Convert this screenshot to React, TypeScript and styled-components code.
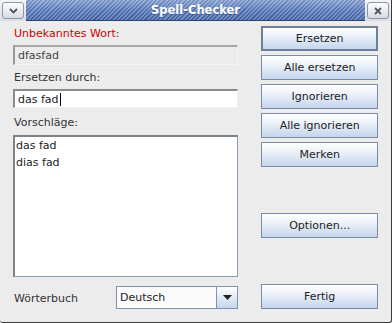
import styled, { createGlobalStyle } from "styled-components";

const GlobalStyle = createGlobalStyle`
  html, body {
    margin: 0;
    padding: 0;
    background: #ededed;
  }
  body {
    font-family: "DejaVu Sans", "Liberation Sans", sans-serif;
    font-size: 11px;
    color: #333333;
  }
`;

const Window = styled.div`
  width: 392px;
  height: 323px;
  box-sizing: border-box;
  display: flex;
  flex-direction: column;
  background: #ececec;
  border-right: 1px solid #3a3a3a;
  border-bottom: 1px solid #3a3a3a;
  border-bottom-left-radius: 3px;
  border-bottom-right-radius: 3px;
  overflow: hidden;
`;

const TitleBar = styled.div`
  height: 21px;
  flex-shrink: 0;
  display: flex;
  align-items: stretch;
  background: linear-gradient(#f4f4f4, #d9dde4);
`;

const WinButton = styled.div`
  width: 22px;
  height: 17px;
  margin: 2px 2px 0 2px;
  box-sizing: border-box;
  border: 1px solid #8c96a8;
  border-radius: 3px;
  background: linear-gradient(#fdfdfd, #d6dbe3);
  display: flex;
  align-items: center;
  justify-content: center;
  color: #505560;
`;

const TitleStrip = styled.div`
  flex: 1;
  display: flex;
  align-items: center;
  justify-content: center;
  border-bottom: 1px solid #2c4170;
  background:
    repeating-linear-gradient(
      135deg,
      rgba(255, 255, 255, 0.2) 0px,
      rgba(255, 255, 255, 0.2) 1.5px,
      rgba(0, 0, 0, 0.1) 1.5px,
      rgba(0, 0, 0, 0.1) 3px
    ),
    linear-gradient(#8aa5d6, #5a7cbf 55%, #4a6cb0);
`;

const Title = styled.span`
  color: #ffffff;
  font-weight: bold;
  font-size: 11.5px;
  text-shadow: 0 1px 0 rgba(30, 50, 100, 0.5);
`;

const Content = styled.div`
  flex: 1;
  display: flex;
  gap: 23px;
  padding: 5px 13px 13px 13px;
`;

const LeftColumn = styled.div`
  width: 226px;
  display: flex;
  flex-direction: column;
`;

const Label = styled.div<{ $gap?: number; $warn?: boolean }>`
  height: 16px;
  line-height: 16px;
  margin-top: ${({ $gap }) => $gap ?? 0}px;
  color: ${({ $warn }) => ($warn ? "#d40000" : "#333333")};
  padding-left: 1px;
`;

const Colon = styled.span`
  color: #333333;
`;

const Field = styled.div<{ $disabled?: boolean; $height: number }>`
  height: ${({ $height }) => $height}px;
  margin-top: 3px;
  box-sizing: border-box;
  display: flex;
  align-items: center;
  padding-left: 3px;
  background: ${({ $disabled }) => ($disabled ? "#ececec" : "#ffffff")};
  border-style: solid;
  border-width: 2px 1px 1px 2px;
  border-color: ${({ $disabled }) =>
    $disabled ? "#a8a8a8 #f4f4f4 #f4f4f4 #9a9a9a" : "#8a8a8a #f2f2f2 #f2f2f2 #8a8a8a"};
  color: ${({ $disabled }) => ($disabled ? "#444444" : "#222222")};
`;

const Caret = styled.span`
  display: inline-block;
  width: 1px;
  height: 13px;
  margin-left: 1px;
  background: #000000;
`;

const ListBox = styled.div`
  height: 142px;
  margin-top: 4px;
  box-sizing: border-box;
  background: #ffffff;
  border-style: solid;
  border-width: 2px 1px 1px 2px;
  border-color: #7d838a #8b9bb3 #8b9bb3 #7d838a;
  padding-left: 1px;
`;

const ListItem = styled.div`
  height: 17px;
  line-height: 17px;
  color: #222222;
`;

const BottomRow = styled.div`
  margin-top: 9px;
  height: 23px;
  display: flex;
  align-items: center;
`;

const ComboLabel = styled.span`
  width: 102px;
  padding-left: 1px;
  padding-top: 2px;
`;

const Combo = styled.div`
  flex: 1;
  height: 23px;
  box-sizing: border-box;
  display: flex;
  border: 1px solid #7f92b3;
  background: #fbfbfb;
`;

const ComboText = styled.div`
  flex: 1;
  display: flex;
  align-items: center;
  padding-left: 3px;
  color: #222222;
`;

const ComboArrow = styled.div`
  width: 20px;
  border-left: 1px solid #7f92b3;
  background: linear-gradient(#ffffff, #c6d6ec);
  display: flex;
  align-items: center;
  justify-content: center;
`;

const RightColumn = styled.div`
  width: 117px;
  display: flex;
  flex-direction: column;
`;

const Button = styled.div<{ $gap?: number; $default?: boolean }>`
  height: 25px;
  margin-top: ${({ $gap }) => $gap ?? 0}px;
  box-sizing: border-box;
  display: flex;
  align-items: center;
  justify-content: center;
  border: ${({ $default }) => ($default ? "2px solid #6f7f99" : "1px solid #7a8ba8")};
  background: linear-gradient(#ffffff 0%, #eef3fa 35%, #c4d5ec 100%);
  color: #222222;
`;

const Spacer = styled.div`
  flex: 1;
`;

export default function App() {
  return (
    <>
      <GlobalStyle />
      <Window>
        <TitleBar>
          <WinButton>
            <svg width="9" height="6" viewBox="0 0 9 6">
              <path d="M1 1 L4.5 4.5 L8 1" fill="none" stroke="#505560" strokeWidth="1.8" />
            </svg>
          </WinButton>
          <TitleStrip>
            <Title>Spell-Checker</Title>
          </TitleStrip>
          <WinButton>
            <svg width="8" height="8" viewBox="0 0 8 8">
              <path d="M1 1 L7 7 M7 1 L1 7" fill="none" stroke="#505560" strokeWidth="1.8" />
            </svg>
          </WinButton>
        </TitleBar>
        <Content>
          <LeftColumn>
            <Label $warn>
              Unbekanntes Wort<Colon>:</Colon>
            </Label>
            <Field $disabled $height={20}>dfasfad</Field>
            <Label $gap={5}>Ersetzen durch:</Label>
            <Field $height={19}>
              das fad<Caret />
            </Field>
            <Label $gap={7}>Vorschläge:</Label>
            <ListBox>
              <ListItem>das fad</ListItem>
              <ListItem>dias fad</ListItem>
            </ListBox>
            <BottomRow>
              <ComboLabel>Wörterbuch</ComboLabel>
              <Combo>
                <ComboText>Deutsch</ComboText>
                <ComboArrow>
                  <svg width="9" height="5" viewBox="0 0 9 5">
                    <path d="M0 0 H9 L4.5 5 Z" fill="#222222" />
                  </svg>
                </ComboArrow>
              </Combo>
            </BottomRow>
          </LeftColumn>
          <RightColumn>
            <Button $default>Ersetzen</Button>
            <Button $gap={4}>Alle ersetzen</Button>
            <Button $gap={4}>Ignorieren</Button>
            <Button $gap={4}>Alle ignorieren</Button>
            <Button $gap={4}>Merken</Button>
            <Spacer />
            <Button>Optionen...</Button>
            <Spacer />
            <Button>Fertig</Button>
          </RightColumn>
        </Content>
      </Window>
    </>
  );
}
